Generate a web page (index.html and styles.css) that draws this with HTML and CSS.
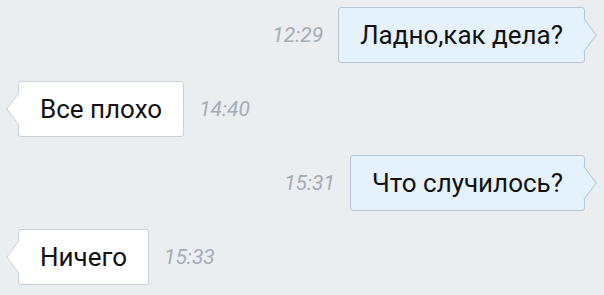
FILE: index.html
```html
<!DOCTYPE html>
<html lang="ru">
<head>
    <meta charset="UTF-8">
    <title>Диалог</title>
    <link rel="stylesheet" href="styles.css">
</head>
<body>
    <div class="chat">
        <div class="row out">
            <span class="time">12:29</span>
            <div class="bubble">Ладно,как дела?</div>
        </div>
        <div class="row in">
            <div class="bubble">Все плохо</div>
            <span class="time">14:40</span>
        </div>
        <div class="row out">
            <span class="time">15:31</span>
            <div class="bubble">Что случилось?</div>
        </div>
        <div class="row in">
            <div class="bubble">Ничего</div>
            <span class="time">15:33</span>
        </div>
    </div>
</body>
</html>
```
FILE: styles.css
```css
* {
    margin: 0;
    padding: 0;
    box-sizing: border-box;
}

body {
    background-color: #ebeef1;
    font-family: Roboto, "Noto Sans", sans-serif;
    color: #111;
}

.chat {
    display: flex;
    flex-direction: column;
    gap: 18px;
    padding: 7px 19px 0 18px;
}

.row {
    display: flex;
    align-items: center;
    gap: 15px;
}

.row.out {
    justify-content: flex-end;
}

.bubble {
    position: relative;
    height: 56px;
    padding: 0 21px;
    display: flex;
    align-items: center;
    font-size: 26px;
    border-radius: 3px;
    background-color: #fff;
    border: 1px solid #c9d0d7;
}

.out .bubble {
    background-color: #e5f2fb;
    border-color: #b8c7d4;
}

/* bubble tails */
.bubble::after {
    content: "";
    position: absolute;
    top: 50%;
    width: 23px;
    height: 23px;
    margin-top: -12px;
    background-color: inherit;
    border: 1px solid;
    border-color: inherit;
}

.out .bubble::after {
    right: -12px;
    border-left: none;
    border-bottom: none;
    transform: scaleX(0.75) rotate(45deg);
}

.in .bubble::after {
    left: -12px;
    border-right: none;
    border-top: none;
    transform: scaleX(0.75) rotate(45deg);
}

.time {
    font-size: 21px;
    font-style: italic;
    color: #a4acb4;
}
```
